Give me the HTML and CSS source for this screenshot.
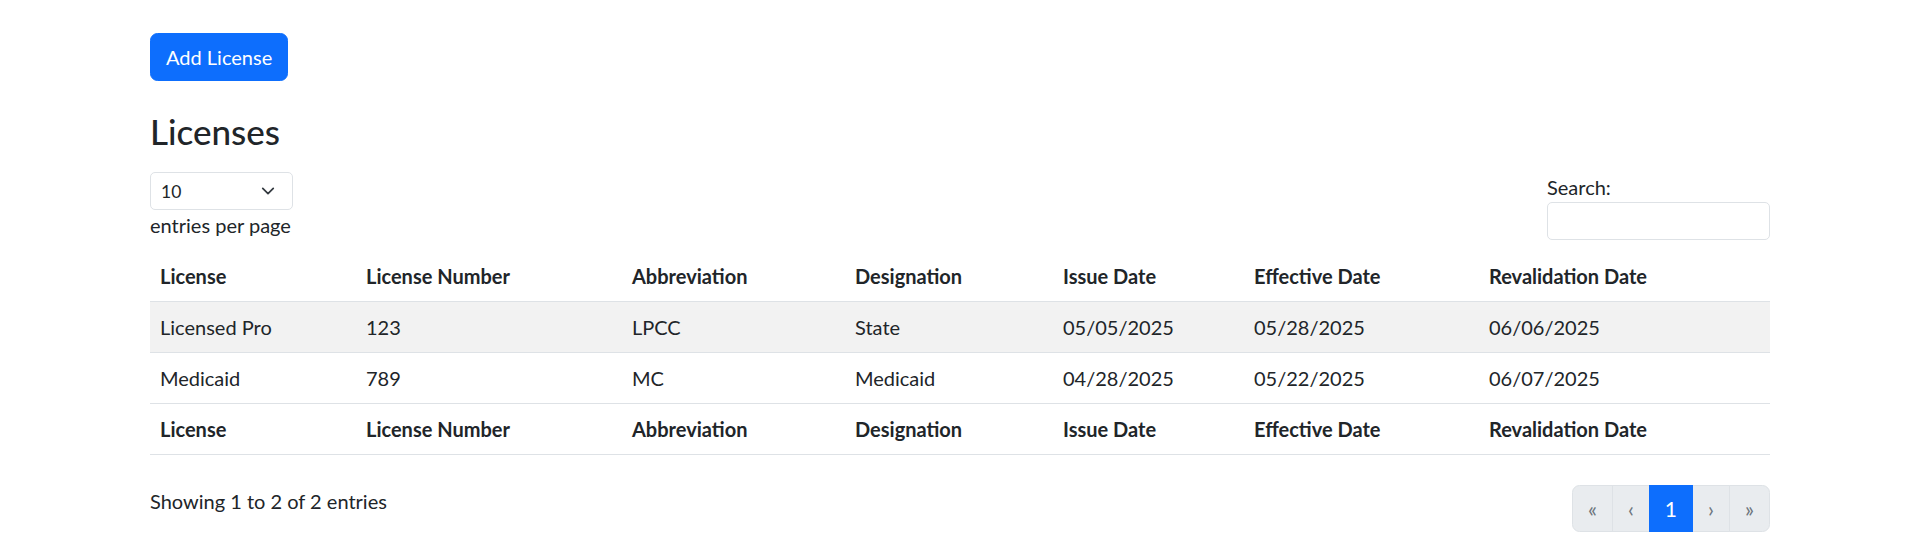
FILE: index.html
```html
<!doctype html>
<html lang="en">
  <head>
    <meta charset="UTF-8" />
    <meta name="viewport" content="width=device-width, initial-scale=1.0" />
    <title>Licenses</title>
    <link rel="stylesheet" href="styles.css">
  </head>
  <body>
    <div class="container">
      <button type="button" class="btn-add">Add License</button>

      <h3 class="page-title">Licenses</h3>

      <div class="dt-top">
        <div class="dt-length">
          <select class="length-select" id="pageLength">
            <option>10</option>
            <option>25</option>
            <option>50</option>
            <option>100</option>
          </select>
          <label for="pageLength">entries per page</label>
        </div>
        <div class="dt-search">
          <label for="search">Search:</label>
          <input type="search" id="search" class="search-input" />
        </div>
      </div>

      <table class="licenses">
        <colgroup>
          <col style="width: 206px" />
          <col style="width: 266px" />
          <col style="width: 223px" />
          <col style="width: 208px" />
          <col style="width: 191px" />
          <col style="width: 235px" />
          <col />
        </colgroup>
        <thead>
          <tr>
            <th>License</th>
            <th>License Number</th>
            <th>Abbreviation</th>
            <th>Designation</th>
            <th>Issue Date</th>
            <th>Effective Date</th>
            <th>Revalidation Date</th>
          </tr>
        </thead>
        <tbody>
          <tr class="odd">
            <td>Licensed Pro</td>
            <td>123</td>
            <td>LPCC</td>
            <td>State</td>
            <td>05/05/2025</td>
            <td>05/28/2025</td>
            <td>06/06/2025</td>
          </tr>
          <tr>
            <td>Medicaid</td>
            <td>789</td>
            <td>MC</td>
            <td>Medicaid</td>
            <td>04/28/2025</td>
            <td>05/22/2025</td>
            <td>06/07/2025</td>
          </tr>
        </tbody>
        <tfoot>
          <tr>
            <th>License</th>
            <th>License Number</th>
            <th>Abbreviation</th>
            <th>Designation</th>
            <th>Issue Date</th>
            <th>Effective Date</th>
            <th>Revalidation Date</th>
          </tr>
        </tfoot>
      </table>

      <div class="dt-bottom">
        <div class="dt-info">Showing 1 to 2 of 2 entries</div>
        <ul class="pagination">
          <li class="page-item disabled"><span class="page-link">&laquo;</span></li>
          <li class="page-item disabled"><span class="page-link">&lsaquo;</span></li>
          <li class="page-item active"><span class="page-link">1</span></li>
          <li class="page-item disabled"><span class="page-link">&rsaquo;</span></li>
          <li class="page-item disabled"><span class="page-link">&raquo;</span></li>
        </ul>
      </div>
    </div>
  </body>
</html>
```

FILE: styles.css
```css
* {
  box-sizing: border-box;
}

body {
  margin: 0;
  font-family: "Segoe UI", Lato, "Noto Sans", sans-serif;
  font-size: 20px;
  line-height: 30px;
  color: #212529;
  background-color: #fff;
}

.container {
  width: 1620px;
  margin: 0 auto;
  padding-top: 33px;
}

.btn-add {
  display: block;
  padding: 8px 15px;
  font-family: inherit;
  font-size: 20px;
  line-height: 30px;
  color: #fff;
  background-color: #0d6efd;
  border: 1px solid #0d6efd;
  border-radius: 7.5px;
  cursor: pointer;
}

.page-title {
  margin: 29px 0 20px;
  font-size: 35px;
  font-weight: 500;
  line-height: 42px;
}

.dt-top {
  display: flex;
  justify-content: space-between;
  align-items: flex-start;
}

.dt-length label,
.dt-search label {
  display: block;
}

.length-select {
  display: block;
  width: 143px;
  height: 38px;
  padding: 0 10px;
  font-family: inherit;
  font-size: 17.5px;
  color: #212529;
  background-color: #fff;
  background-image: url("data:image/svg+xml,%3csvg xmlns='http://www.w3.org/2000/svg' viewBox='0 0 16 16'%3e%3cpath fill='none' stroke='%23343a40' stroke-linecap='round' stroke-linejoin='round' stroke-width='2' d='m2 5 6 6 6-6'/%3e%3c/svg%3e");
  background-repeat: no-repeat;
  background-position: right 15px center;
  background-size: 18px 14px;
  border: 1px solid #dee2e6;
  border-radius: 5px;
  appearance: none;
}

.search-input {
  display: block;
  width: 223px;
  height: 38px;
  padding: 0 10px;
  font-family: inherit;
  font-size: 17.5px;
  border: 1px solid #dee2e6;
  border-radius: 5px;
  outline: none;
}

.licenses {
  width: 100%;
  margin-top: 11px;
  border-collapse: collapse;
  table-layout: fixed;
}

.licenses th,
.licenses td {
  padding: 10px;
  text-align: left;
  white-space: nowrap;
  border-bottom: 1px solid #dee2e6;
}

.licenses th {
  font-weight: 700;
}

.licenses tr.odd td {
  background-color: #f2f2f2;
}

.dt-bottom {
  display: flex;
  justify-content: space-between;
  align-items: flex-start;
  margin-top: 30px;
}

.dt-info {
  padding-top: 1px;
}

.pagination {
  display: flex;
  margin: 0;
  padding: 0;
  list-style: none;
}

.page-link {
  display: block;
  padding: 8px 15px;
  margin-left: -1px;
  font-size: 21px;
  line-height: 29px;
  color: #6c757d;
  background-color: #e9ecef;
  border: 1px solid #dee2e6;
}

.page-item:first-child .page-link {
  margin-left: 0;
  border-radius: 7.5px 0 0 7.5px;
}

.page-item:last-child .page-link {
  border-radius: 0 7.5px 7.5px 0;
}

.page-item.active .page-link {
  position: relative;
  color: #fff;
  background-color: #0d6efd;
  border-color: #0d6efd;
}
```
